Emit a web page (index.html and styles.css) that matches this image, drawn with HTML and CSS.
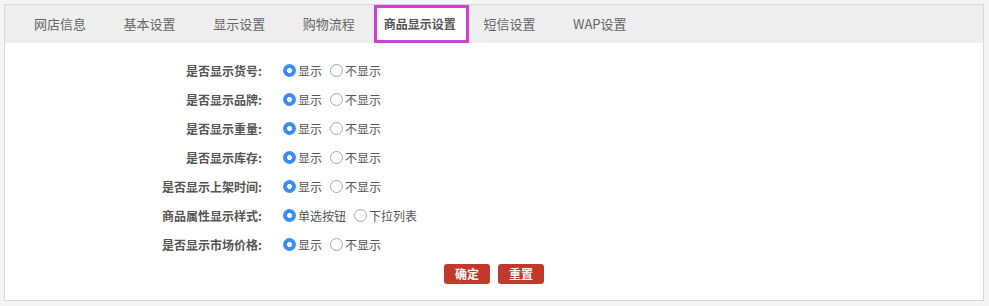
FILE: index.html
```html
<!DOCTYPE html>
<html lang="zh-CN">
<head>
<meta charset="utf-8">
<title>商品显示设置</title>
<link rel="stylesheet" href="styles.css">
</head>
<body>
<div class="panel">
  <ul class="tabs">
    <li class="tab">网店信息</li>
    <li class="tab">基本设置</li>
    <li class="tab">显示设置</li>
    <li class="tab">购物流程</li>
    <li class="tab active">商品显示设置</li>
    <li class="tab">短信设置</li>
    <li class="tab">WAP设置</li>
  </ul>
  <form class="form">
    <div class="row"><label class="lbl">是否显示货号:</label><div class="opts"><label class="opt"><input type="radio" name="r1" checked>显示</label><label class="opt"><input type="radio" name="r1">不显示</label></div></div>
    <div class="row"><label class="lbl">是否显示品牌:</label><div class="opts"><label class="opt"><input type="radio" name="r2" checked>显示</label><label class="opt"><input type="radio" name="r2">不显示</label></div></div>
    <div class="row"><label class="lbl">是否显示重量:</label><div class="opts"><label class="opt"><input type="radio" name="r3" checked>显示</label><label class="opt"><input type="radio" name="r3">不显示</label></div></div>
    <div class="row"><label class="lbl">是否显示库存:</label><div class="opts"><label class="opt"><input type="radio" name="r4" checked>显示</label><label class="opt"><input type="radio" name="r4">不显示</label></div></div>
    <div class="row"><label class="lbl">是否显示上架时间:</label><div class="opts"><label class="opt"><input type="radio" name="r5" checked>显示</label><label class="opt"><input type="radio" name="r5">不显示</label></div></div>
    <div class="row"><label class="lbl">商品属性显示样式:</label><div class="opts"><label class="opt"><input type="radio" name="r6" checked>单选按钮</label><label class="opt"><input type="radio" name="r6">下拉列表</label></div></div>
    <div class="row"><label class="lbl">是否显示市场价格:</label><div class="opts"><label class="opt"><input type="radio" name="r7" checked>显示</label><label class="opt"><input type="radio" name="r7">不显示</label></div></div>
    <div class="actions">
      <button type="button" class="btn">确定</button>
      <button type="reset" class="btn">重置</button>
    </div>
  </form>
</div>
</body>
</html>
```
FILE: styles.css
```css
html, body {
  margin: 0;
  padding: 0;
  background: #f5f5f5;
  font-family: "Noto Sans CJK SC", "Noto Sans", sans-serif;
  font-size: 12px;
  color: #555;
}

.panel {
  margin: 4px 5px 0 4px;
  height: 295px;
  border: 1px solid #d8d8d8;
  background: #fff;
  box-sizing: content-box;
}

.tabs {
  list-style: none;
  margin: 0;
  padding: 0 0 0 10.2px;
  height: 38px;
  background: #eeeeee;
  display: flex;
}

.tab {
  padding: 0 18.8px;
  line-height: 38px;
  font-size: 13px;
  color: #666;
  white-space: nowrap;
}

.tab.active {
  background: #fff;
  border: 3px solid #d23fd6;
  padding: 0 10px 0 7px;
  margin-right: -4px;
  line-height: 32px;
  font-size: 12px;
  font-weight: bold;
  color: #555;
}

.form {
  margin: 0;
  padding: 13px 0 0 0;
}

.row {
  display: grid;
  grid-template-columns: 257px 1fr;
  column-gap: 21px;
  height: 29px;
  align-items: center;
}

.lbl {
  text-align: right;
  font-weight: bold;
  color: #555;
}

.opts {
  display: flex;
  align-items: center;
  gap: 8px;
}

.opt {
  display: flex;
  align-items: center;
  color: #555;
}

.opt input {
  appearance: none;
  -webkit-appearance: none;
  margin: 0 2px 0 0;
  width: 13px;
  height: 13px;
  border-radius: 50%;
  border: 1px solid #a8a8a8;
  background: #fff;
  box-sizing: border-box;
  position: relative;
}

.opt input:checked {
  border: none;
  background: radial-gradient(circle, #fff 0 2.2px, #3b8ef5 2.8px);
}

.actions {
  display: flex;
  justify-content: center;
  gap: 8px;
  margin-top: 5px;
}

.btn {
  width: 46px;
  height: 20px;
  padding: 0;
  border: none;
  border-radius: 3px;
  background: #c2392b;
  color: #fff;
  font-family: "Noto Sans CJK SC", sans-serif;
  font-size: 12px;
  font-weight: bold;
  line-height: 20px;
}
```
